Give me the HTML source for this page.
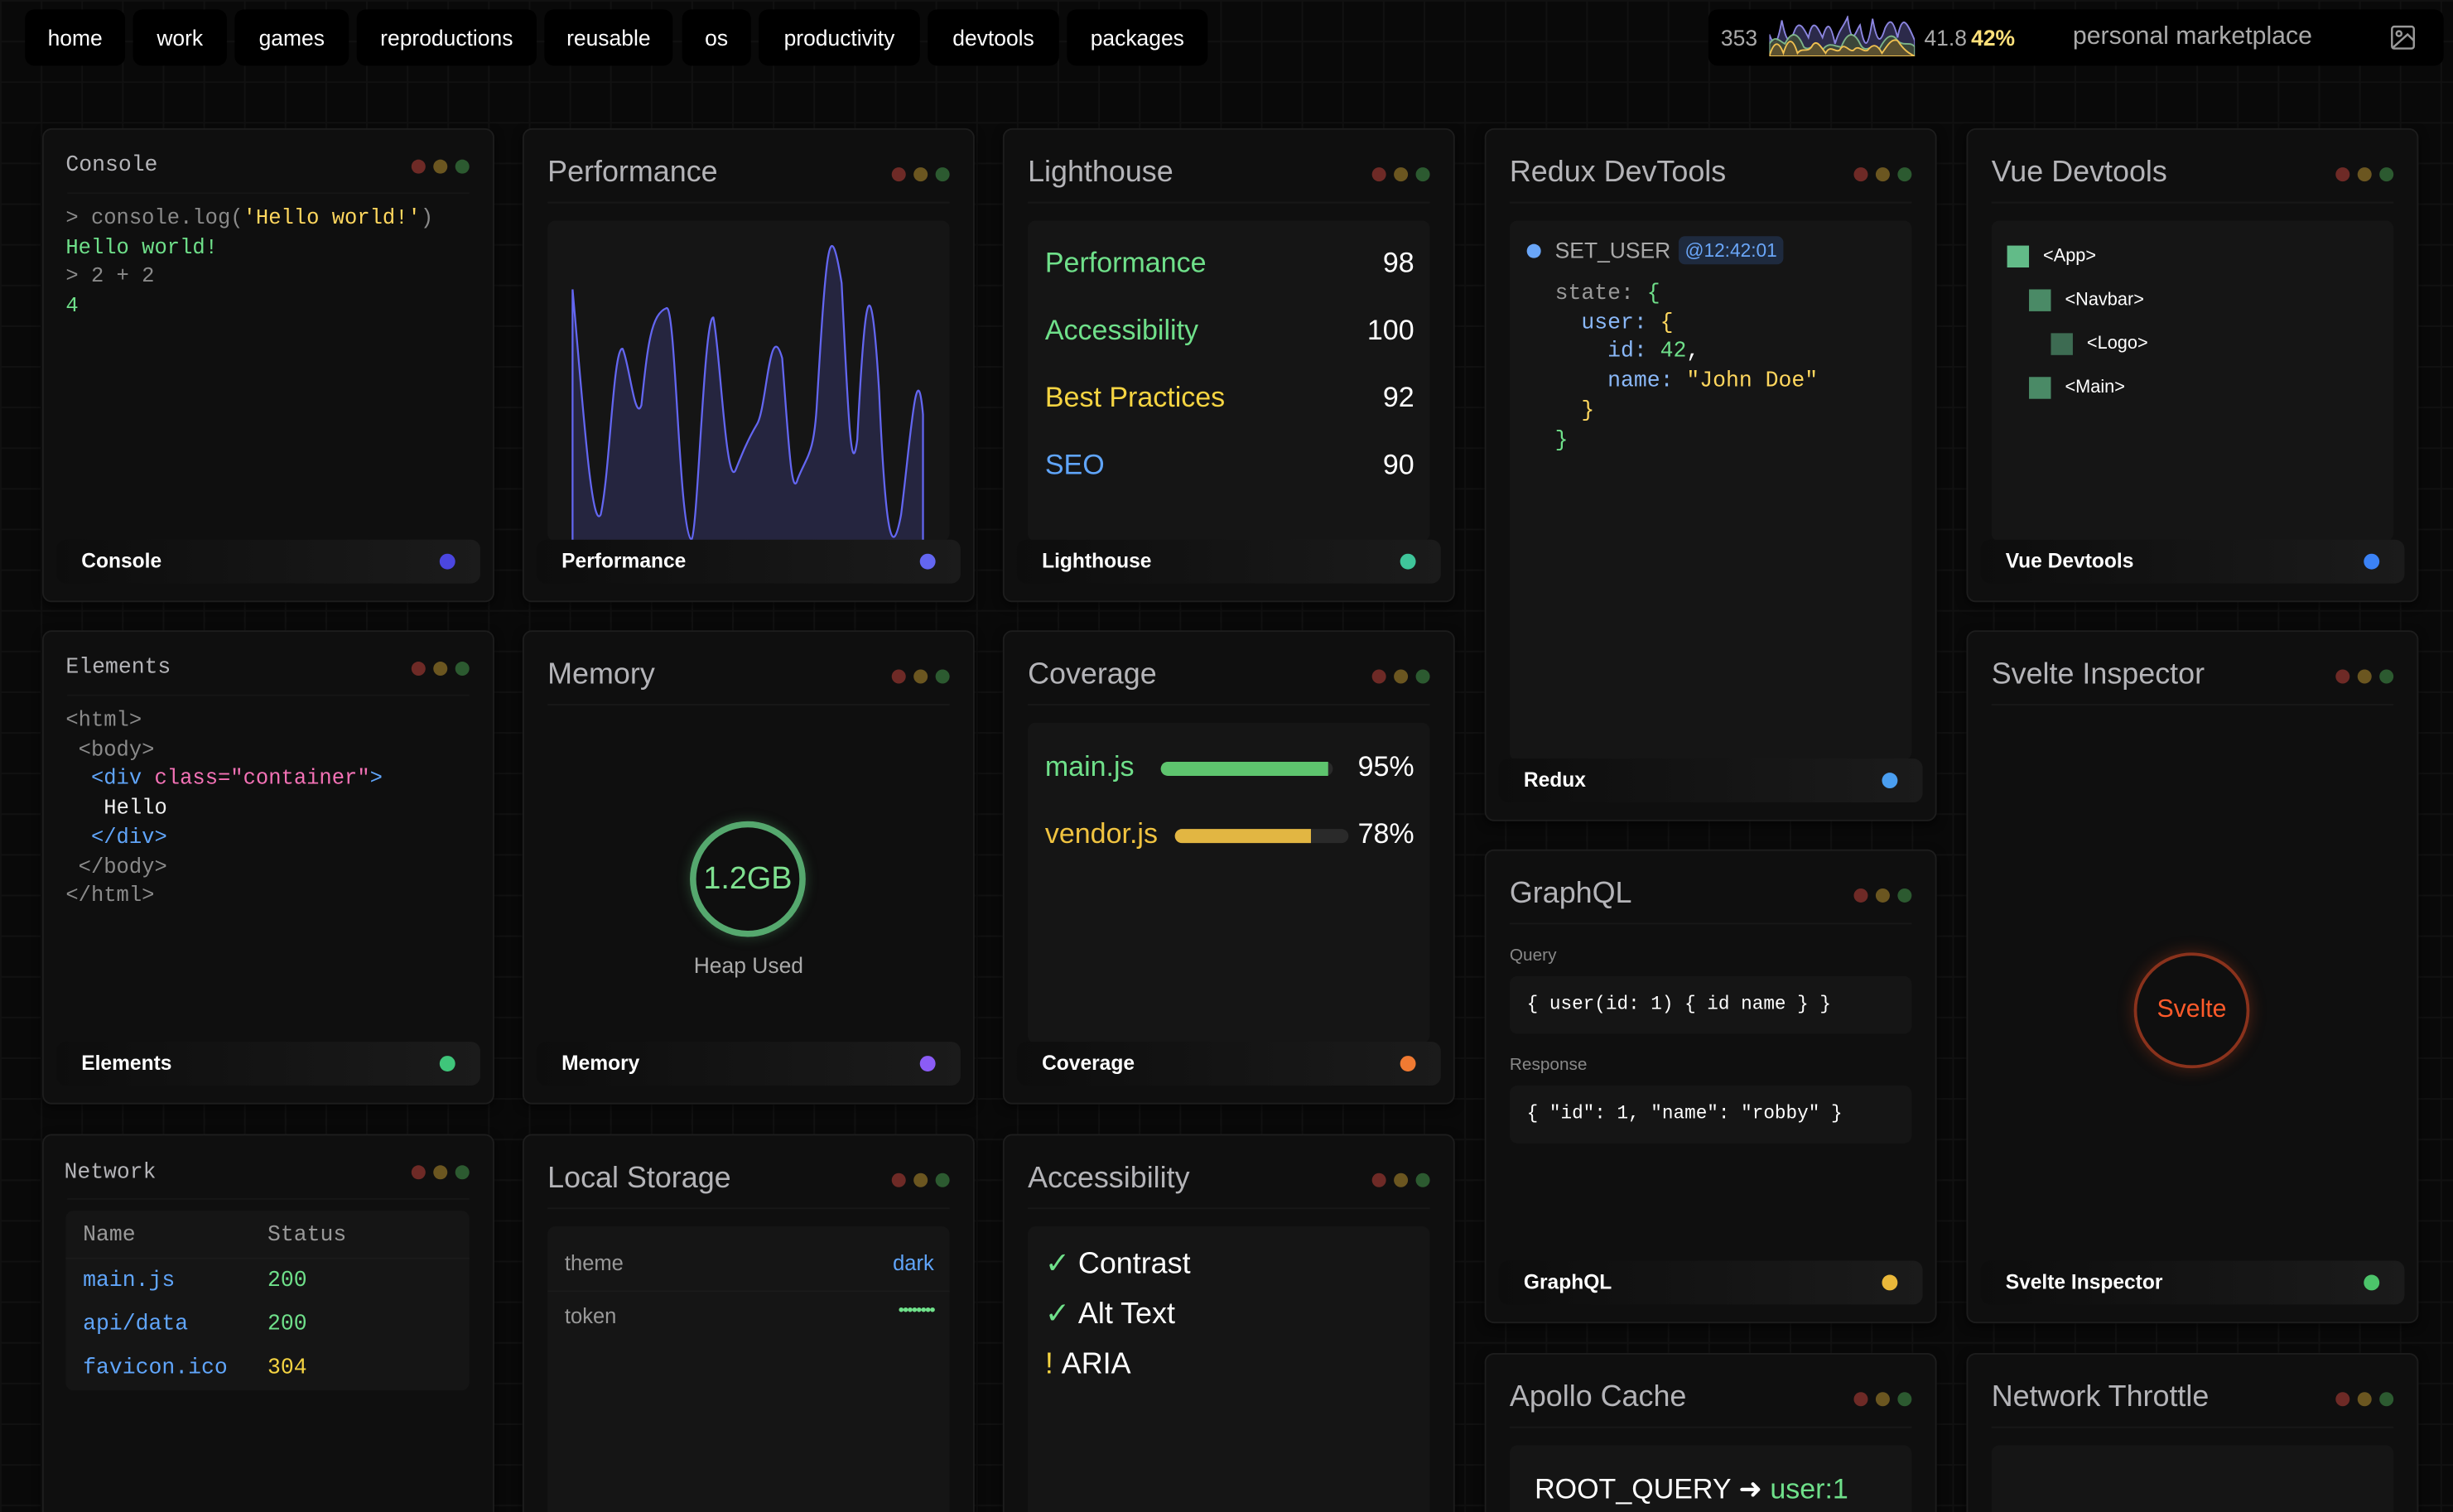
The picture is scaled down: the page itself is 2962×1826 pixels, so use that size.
<!DOCTYPE html>
<html><head><meta charset="utf-8">
<style>
html,body{margin:0;padding:0;background:#080808;overflow:hidden}
body{width:2962px;height:1826px;position:relative}
#f{position:absolute;left:0;top:0;width:1568px;height:967px;transform:scale(1.8890);transform-origin:0 0;font-family:"Liberation Sans",sans-serif;overflow:hidden;
background-color:#090909;
background-image:linear-gradient(#111 1px,transparent 1px),linear-gradient(90deg,#111 1px,transparent 1px);background-size:26px 26px;}
.a{position:absolute}
.nav{position:absolute;top:6px;height:36px;background:#000;border-radius:6px;color:#fff;font-size:14px;line-height:36px;text-align:center}
.card{position:absolute;width:287px;background:#0f0f0f;border:1px solid #1d1d1d;border-radius:6px;box-shadow:0 2px 6px rgba(0,0,0,.6);overflow:hidden}
.t{position:absolute;left:15px;top:17px;font-size:19px;color:#b4b4b8}
.tm{position:absolute;left:14px;top:15px;font-family:"Liberation Mono",monospace;font-size:14px;color:#b4b4b8}
.dots{position:absolute;right:15px;top:24px;line-height:0}
.dots i{display:inline-block;width:9px;height:9px;border-radius:50%;margin-left:5px}
.sep{position:absolute;left:15px;right:15px;top:46px;height:1px;background:#181818}
.panel{position:absolute;left:15px;right:15px;background:#151515;border-radius:5px}
.foot{position:absolute;left:8px;right:8px;height:28px;border-radius:6px;background:linear-gradient(90deg,#0d0d0d,#1b1b1b);color:#fff;font-weight:bold;font-size:13px;line-height:28px}
.foot span{position:absolute;left:16px}
.foot b{position:absolute;right:16px;top:9px;width:10px;height:10px;border-radius:50%}
.mono{font-family:"Liberation Mono",monospace}
</style></head><body><div id="f">

<div class="nav" style="left:16px;width:64px">home</div>
<div class="nav" style="left:85px;width:60px">work</div>
<div class="nav" style="left:150px;width:73px">games</div>
<div class="nav" style="left:228px;width:115px">reproductions</div>
<div class="nav" style="left:348px;width:82px">reusable</div>
<div class="nav" style="left:436px;width:44px">os</div>
<div class="nav" style="left:485px;width:103px">productivity</div>
<div class="nav" style="left:593px;width:84px">devtools</div>
<div class="nav" style="left:682px;width:90px">packages</div>

<div class="nav" style="left:1092px;width:470px;text-align:left">
 <span class="a" style="left:8px;color:#aaa;font-size:14px">353</span>
 <svg class="a" style="left:39px;top:4px" width="93" height="26" viewBox="0 0 93 26">
  <path d="M0 26 L0 12 C3 20 5 20 8 3 C11 18 13 18 16 10 C19 2 22 8 25 14 C28 0 31 8 34 14 C37 4 39 4 42 18 C45 8 47 8 50 1 C53 22 55 10 58 6 C61 22 63 22 66 2 C69 18 71 18 74 8 C77 2 79 2 82 14 C85 -2 88 4 93 16 L93 26Z" fill="#2c2a4a" stroke="#8b85e0" stroke-width="1"/>
  <path d="M0 26 L0 18 C4 12 6 16 10 18 C14 10 18 10 22 20 C26 24 30 14 34 22 C38 16 42 20 46 20 C50 10 54 10 58 18 C62 26 66 16 70 22 C74 14 78 10 82 16 C86 20 90 16 93 20 L93 26Z" fill="#3f4a38" stroke="#86c48f" stroke-width="1" opacity=".9"/>
  <path d="M0 26 C3 16 6 16 9 24 C12 14 15 14 18 24 C21 20 24 24 27 20 C30 14 33 20 36 24 C39 18 42 24 45 22 C48 16 51 24 54 22 C57 18 60 24 63 22 C66 18 69 18 72 24 C75 20 78 14 82 16 C86 22 89 24 93 26Z" fill="#5a5030" stroke="#f0c050" stroke-width="1"/>
 </svg>
 <span class="a" style="left:138px;color:#aaa;font-size:14px">41.8</span>
 <span class="a" style="left:168px;color:#ffe07a;font-size:14px;font-weight:bold">42%</span>
 <span class="a" style="left:233px;color:#aaa;font-size:16px">personal marketplace</span>
 <svg class="a" style="left:436px;top:10px" width="16" height="16" viewBox="0 0 16 16" fill="none" stroke="#999" stroke-width="1.3"><rect x="1" y="1" width="14" height="14" rx="1.5"/><circle cx="5.5" cy="5.5" r="1.6"/><path d="M1 15 L11 6 L15 10"/></svg>
</div>

<!-- Console -->
<div class="card" style="left:27px;top:82px;height:301px">
 <div class="tm">Console</div>
 <div class="dots" style="top:19px"><i style="background:#6e2a26"></i><i style="background:#6b5620"></i><i style="background:#2c5a30"></i></div>
 <div class="sep" style="top:40px;background:#161616"></div>
 <div class="a mono" style="left:14px;top:49px;font-size:13.5px;line-height:18.7px;color:#8a8a8a;white-space:pre">&gt; console.log(<span style="color:#ffd75e">'Hello world!'</span>)
<span style="color:#6fe08a">Hello world!</span>
&gt; 2 + 2
<span style="color:#6fe08a">4</span></div>
 <div class="foot" style="top:262px"><span>Console</span><b style="background:#4b46e0"></b></div>
</div>

<!-- Performance -->
<div class="card" style="left:334px;top:82px;height:301px">
 <div class="t">Performance</div>
 <div class="dots"><i style="background:#6e2a26"></i><i style="background:#6b5620"></i><i style="background:#2c5a30"></i></div>
 <div class="sep"></div>
 <div class="panel" style="top:58px;height:205px;overflow:hidden">
  <svg class="a" style="left:0;top:0" width="257" height="205" viewBox="0 0 257 205">
   <path d="M16 44 C22 110 28 200 34 188 C40 160 42 80 48 82 C52 90 56 130 60 118 C64 80 66 60 76 56 C82 52 84 200 92 204 C96 200 100 60 106 62 C110 80 114 170 120 160 C124 150 128 140 134 130 C140 120 142 60 150 88 C154 140 156 180 160 165 C166 150 170 150 172 120 C178 20 180 -10 188 40 C192 120 194 170 198 140 C202 60 206 10 212 110 C216 200 220 220 226 188 C232 140 236 80 240 124 L240 205 L16 205 Z" fill="#25253f" stroke="#6366f1" stroke-width="1.2"/>
  </svg>
 </div>
 <div class="foot" style="top:262px"><span>Performance</span><b style="background:#6366f1"></b></div>
</div>

<!-- Lighthouse -->
<div class="card" style="left:641px;top:82px;height:301px">
 <div class="t">Lighthouse</div>
 <div class="dots"><i style="background:#6e2a26"></i><i style="background:#6b5620"></i><i style="background:#2c5a30"></i></div>
 <div class="sep"></div>
 <div class="panel" style="top:58px;height:205px;font-size:18px">
  <div class="a" style="left:11px;top:17px;color:#6fe08a">Performance</div><div class="a" style="right:10px;top:17px;color:#fff">98</div>
  <div class="a" style="left:11px;top:60px;color:#6fe08a">Accessibility</div><div class="a" style="right:10px;top:60px;color:#fff">100</div>
  <div class="a" style="left:11px;top:103px;color:#f5d442">Best Practices</div><div class="a" style="right:10px;top:103px;color:#fff">92</div>
  <div class="a" style="left:11px;top:146px;color:#60a5fa">SEO</div><div class="a" style="right:10px;top:146px;color:#fff">90</div>
 </div>
 <div class="foot" style="top:262px"><span>Lighthouse</span><b style="background:#3fc59a"></b></div>
</div>

<!-- Redux -->
<div class="card" style="left:949px;top:82px;height:441px">
 <div class="t">Redux DevTools</div>
 <div class="dots"><i style="background:#6e2a26"></i><i style="background:#6b5620"></i><i style="background:#2c5a30"></i></div>
 <div class="sep"></div>
 <div class="panel" style="top:58px;height:345px">
  <div class="a" style="left:11px;top:15px;width:9px;height:9px;border-radius:50%;background:#6aa6f8"></div>
  <div class="a" style="left:29px;top:11px;font-size:14px;color:#aaa">SET_USER</div>
  <div class="a" style="left:108px;top:10px;font-size:12px;color:#6aa6f8;background:#1e2a3e;border-radius:4px;padding:2px 4px">@12:42:01</div>
  <div class="a mono" style="left:29px;top:38px;font-size:14px;line-height:18.7px;color:#999;white-space:pre">state: <span style="color:#6fe08a">{</span>
  <span style="color:#8ab8f8">user:</span> <span style="color:#ffd75e">{</span>
    <span style="color:#8ab8f8">id:</span> <span style="color:#6fe08a">42</span><span style="color:#fff">,</span>
    <span style="color:#8ab8f8">name:</span> <span style="color:#ffd75e">"John Doe"</span>
  <span style="color:#ffd75e">}</span>
<span style="color:#6fe08a">}</span></div>
 </div>
 <div class="foot" style="top:402px"><span>Redux</span><b style="background:#4a9ef0"></b></div>
</div>

<!-- Vue -->
<div class="card" style="left:1257px;top:82px;height:301px">
 <div class="t">Vue Devtools</div>
 <div class="dots"><i style="background:#6e2a26"></i><i style="background:#6b5620"></i><i style="background:#2c5a30"></i></div>
 <div class="sep"></div>
 <div class="panel" style="top:58px;height:205px;font-size:11.5px;color:#fff">
  <div class="a" style="left:10px;top:16px;width:14px;height:14px;background:#62bb88"></div><div class="a" style="left:33px;top:17px">&lt;App&gt;</div>
  <div class="a" style="left:24px;top:44px;width:14px;height:14px;background:#4a8a66"></div><div class="a" style="left:47px;top:45px">&lt;Navbar&gt;</div>
  <div class="a" style="left:38px;top:72px;width:14px;height:14px;background:#3d6b52"></div><div class="a" style="left:61px;top:73px">&lt;Logo&gt;</div>
  <div class="a" style="left:24px;top:100px;width:14px;height:14px;background:#4a8a66"></div><div class="a" style="left:47px;top:101px">&lt;Main&gt;</div>
 </div>
 <div class="foot" style="top:262px"><span>Vue Devtools</span><b style="background:#3b82f6"></b></div>
</div>

<!-- Elements -->
<div class="card" style="left:27px;top:403px;height:301px">
 <div class="tm">Elements</div>
 <div class="dots" style="top:19px"><i style="background:#6e2a26"></i><i style="background:#6b5620"></i><i style="background:#2c5a30"></i></div>
 <div class="sep" style="top:40px;background:#161616"></div>
 <div class="a mono" style="left:14px;top:49px;font-size:13.5px;line-height:18.7px;color:#8a8a8a;white-space:pre">&lt;html&gt;
 &lt;body&gt;
  <span style="color:#60a5fa">&lt;div</span> <span style="color:#f472b6">class="container"</span><span style="color:#60a5fa">&gt;</span>
   <span style="color:#eee">Hello</span>
  <span style="color:#60a5fa">&lt;/div&gt;</span>
 &lt;/body&gt;
&lt;/html&gt;</div>
 <div class="foot" style="top:262px"><span>Elements</span><b style="background:#3fc57a"></b></div>
</div>

<!-- Memory -->
<div class="card" style="left:334px;top:403px;height:301px">
 <div class="t">Memory</div>
 <div class="dots"><i style="background:#6e2a26"></i><i style="background:#6b5620"></i><i style="background:#2c5a30"></i></div>
 <div class="sep"></div>
 <div class="a" style="left:106px;top:121px;width:66px;height:66px;border:4px solid #55a86e;border-radius:50%;box-shadow:0 0 8px rgba(85,168,110,.35);color:#7ee08f;font-size:20px;line-height:66px;text-align:center">1.2GB</div>
 <div class="a" style="left:0;width:287px;top:205px;text-align:center;color:#aaa;font-size:14px">Heap Used</div>
 <div class="foot" style="top:262px"><span>Memory</span><b style="background:#8b5cf6"></b></div>
</div>

<!-- Coverage -->
<div class="card" style="left:641px;top:403px;height:301px">
 <div class="t">Coverage</div>
 <div class="dots"><i style="background:#6e2a26"></i><i style="background:#6b5620"></i><i style="background:#2c5a30"></i></div>
 <div class="sep"></div>
 <div class="panel" style="top:58px;height:205px;font-size:18px">
  <div class="a" style="left:11px;top:18px;color:#6fe08a">main.js</div>
  <div class="a" style="left:85px;top:25px;width:110px;height:9px;border-radius:5px;background:#2a2a2a"><div style="width:107px;height:9px;border-radius:5px 0 0 5px;background:#5ec46e"></div></div>
  <div class="a" style="right:10px;top:18px;color:#fff">95%</div>
  <div class="a" style="left:11px;top:61px;color:#f0c340">vendor.js</div>
  <div class="a" style="left:94px;top:68px;width:111px;height:9px;border-radius:5px;background:#2a2a2a"><div style="width:87px;height:9px;border-radius:5px 0 0 5px;background:#e2b642"></div></div>
  <div class="a" style="right:10px;top:61px;color:#fff">78%</div>
 </div>
 <div class="foot" style="top:262px"><span>Coverage</span><b style="background:#f07a32"></b></div>
</div>

<!-- GraphQL -->
<div class="card" style="left:949px;top:543px;height:301px">
 <div class="t">GraphQL</div>
 <div class="dots"><i style="background:#6e2a26"></i><i style="background:#6b5620"></i><i style="background:#2c5a30"></i></div>
 <div class="sep"></div>
 <div class="a" style="left:15px;top:61px;font-size:11px;color:#888">Query</div>
 <div class="panel mono" style="top:80px;height:37px;font-size:12px;line-height:37px;color:#fff;padding-left:11px;box-sizing:border-box;right:15px">{ user(id: 1) { id name } }</div>
 <div class="a" style="left:15px;top:131px;font-size:11px;color:#888">Response</div>
 <div class="panel mono" style="top:150px;height:37px;font-size:12px;line-height:37px;color:#fff;padding-left:11px;box-sizing:border-box">{ "id": 1, "name": "robby" }</div>
 <div class="foot" style="top:262px"><span>GraphQL</span><b style="background:#eab83a"></b></div>
</div>

<!-- Svelte -->
<div class="card" style="left:1257px;top:403px;height:441px">
 <div class="t">Svelte Inspector</div>
 <div class="dots"><i style="background:#6e2a26"></i><i style="background:#6b5620"></i><i style="background:#2c5a30"></i></div>
 <div class="sep"></div>
 <div class="a" style="left:106px;top:205px;width:70px;height:70px;border:2px solid #8a321c;border-radius:50%;box-shadow:0 0 10px rgba(200,70,30,.35);color:#ff5a2a;font-size:16px;line-height:70px;text-align:center">Svelte</div>
 <div class="foot" style="top:402px"><span>Svelte Inspector</span><b style="background:#4cc46a"></b></div>
</div>

<!-- Network -->
<div class="card" style="left:27px;top:725px;height:255px">
 <div class="tm" style="left:13px;top:16px">Network</div>
 <div class="dots" style="top:19px"><i style="background:#6e2a26"></i><i style="background:#6b5620"></i><i style="background:#2c5a30"></i></div>
 <div class="sep" style="top:40px;background:#161616"></div>
 <div class="panel mono" style="left:14px;right:15px;top:48px;height:115px;font-size:14px">
  <div class="a" style="left:11px;top:8px;color:#999">Name</div><div class="a" style="left:129px;top:8px;color:#999">Status</div>
  <div class="a" style="left:0;right:0;top:30px;height:1px;background:#1b1b1b"></div>
  <div class="a" style="left:11px;top:37px;color:#60a5fa">main.js</div><div class="a" style="left:129px;top:37px;color:#6fe08a">200</div>
  <div class="a" style="left:11px;top:65px;color:#60a5fa">api/data</div><div class="a" style="left:129px;top:65px;color:#6fe08a">200</div>
  <div class="a" style="left:11px;top:93px;color:#60a5fa">favicon.ico</div><div class="a" style="left:129px;top:93px;color:#f5d442">304</div>
 </div>
</div>

<!-- Local Storage -->
<div class="card" style="left:334px;top:725px;height:255px">
 <div class="t">Local Storage</div>
 <div class="dots"><i style="background:#6e2a26"></i><i style="background:#6b5620"></i><i style="background:#2c5a30"></i></div>
 <div class="sep"></div>
 <div class="panel" style="top:58px;height:200px;font-size:13.5px">
  <div class="a" style="left:11px;top:16px;color:#999">theme</div><div class="a" style="right:10px;top:16px;color:#60a5fa">dark</div>
  <div class="a" style="left:0;right:0;top:41px;height:1px;background:#1b1b1b"></div>
  <div class="a" style="left:11px;top:50px;color:#999">token</div><div class="a" style="right:10px;top:48px;color:#6fe08a;font-size:11px;letter-spacing:-1px">••••••••</div>
 </div>
</div>

<!-- Accessibility -->
<div class="card" style="left:641px;top:725px;height:255px">
 <div class="t">Accessibility</div>
 <div class="dots"><i style="background:#6e2a26"></i><i style="background:#6b5620"></i><i style="background:#2c5a30"></i></div>
 <div class="sep"></div>
 <div class="panel" style="top:58px;height:200px;font-size:19px;color:#fff">
  <div class="a" style="left:11px;top:13px"><span style="color:#6fe08a">✓</span>&nbsp;Contrast</div>
  <div class="a" style="left:11px;top:45px"><span style="color:#6fe08a">✓</span>&nbsp;Alt Text</div>
  <div class="a" style="left:11px;top:78px"><span style="color:#f5d442">!</span>&nbsp;ARIA</div>
 </div>
</div>

<!-- Apollo -->
<div class="card" style="left:949px;top:865px;height:115px">
 <div class="t">Apollo Cache</div>
 <div class="dots"><i style="background:#6e2a26"></i><i style="background:#6b5620"></i><i style="background:#2c5a30"></i></div>
 <div class="sep"></div>
 <div class="panel" style="top:58px;height:60px">
  <div class="a" style="left:16px;top:18px;font-size:18px;color:#fff">ROOT_QUERY ➜ <span style="color:#6fe08a">user:1</span></div>
 </div>
</div>

<!-- Network Throttle -->
<div class="card" style="left:1257px;top:865px;height:115px">
 <div class="t">Network Throttle</div>
 <div class="dots"><i style="background:#6e2a26"></i><i style="background:#6b5620"></i><i style="background:#2c5a30"></i></div>
 <div class="sep"></div>
 <div class="panel" style="top:58px;height:60px"></div>
</div>

</div></body></html>
